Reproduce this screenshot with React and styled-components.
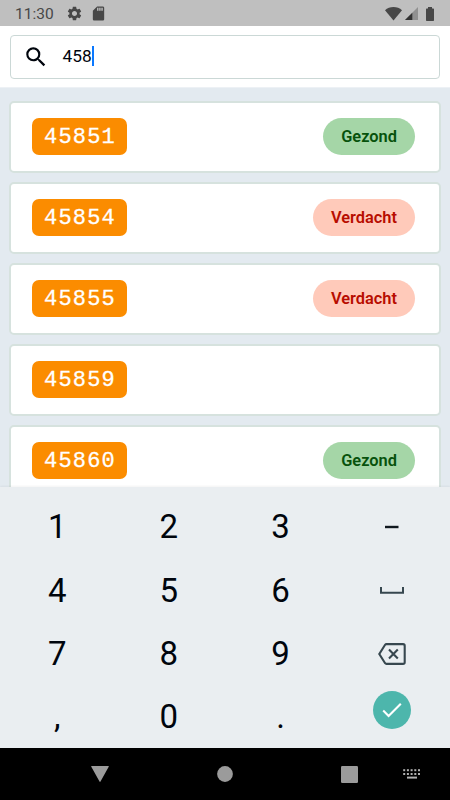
import React from 'react';
import styled, { createGlobalStyle } from 'styled-components';
import { MdSearch, MdSettings, MdSdCard } from 'react-icons/md';

const GlobalStyle = createGlobalStyle`
    * {
        box-sizing: border-box;
    }
    body {
        margin: 0;
        font-family: Roboto, sans-serif;
        color: #00050d;
    }
    svg {
        display: block;
        flex-shrink: 0;
    }
`;

const Screen = styled.div`
    width: 450px;
    height: 800px;
    display: flex;
    flex-direction: column;
    overflow: hidden;
    background: #e3eaf0;
`;

const StatusBar = styled.header`
    height: 26px;
    flex-shrink: 0;
    display: flex;
    align-items: center;
    padding: 1px 16px 0 15px;
    background: #bfbfbf;
    color: #474747;
`;

const Clock = styled.span`
    width: 51px;
    font-size: 15.5px;
    line-height: 20px;
`;

const StatusIcons = styled.div`
    display: flex;
    align-items: center;
    gap: ${props => props.gap};
    margin-left: ${props => props.right ? 'auto' : '0'};
`;

const SearchArea = styled.div`
    height: 62px;
    flex-shrink: 0;
    padding: 9px 10px;
    background: #fff;
    border-bottom: 1px solid #edf1f5;
`;

const SearchBox = styled.div`
    height: 44px;
    display: flex;
    align-items: center;
    padding: 0 0 1px 12px;
    border: 1px solid #cbd8d6;
    border-radius: 4px;
`;

const SearchText = styled.span`
    margin: 0 0 2px 13.5px;
    font-size: 17.3px;
    line-height: 20px;
`;

const Caret = styled.span`
    width: 2px;
    height: 20px;
    margin-bottom: 2px;
    background: #0a78ff;
`;

const List = styled.main`
    flex: 1;
    min-height: 0;
    display: flex;
    flex-direction: column;
    gap: 9px;
    padding: 13px 9px 0;
    overflow: hidden;
`;

const Card = styled.div`
    height: 72px;
    flex-shrink: 0;
    display: flex;
    align-items: center;
    justify-content: space-between;
    padding: 0 24px 1px 21px;
    background: #fff;
    border: 2px solid #d6e2de;
    border-radius: 5px;
`;

const TagNumber = styled.span`
    width: 95px;
    height: 37px;
    padding-left: 12px;
    border-radius: 7px;
    background: #fb8c00;
    color: #fff;
    font-family: "Liberation Mono", monospace;
    font-size: 22px;
    line-height: 40px;
    letter-spacing: 1.2px;
    -webkit-text-stroke: 0.3px #fff;
`;

const Status = styled.span`
    height: 37px;
    padding: 0 18px;
    border-radius: 19px;
    font-size: 16.4px;
    font-weight: 600;
    line-height: 38px;
    background: ${props => props.healthy ? '#a5d6a7' : '#ffcaba'};
    color: ${props => props.healthy ? '#07520c' : '#b80d00'};
`;

const Keyboard = styled.section`
    height: 261px;
    flex-shrink: 0;
    display: grid;
    grid-template-columns: repeat(4, 1fr);
    grid-template-rows: repeat(4, 63.4px);
    padding: 8.5px 2px 0 1.4px;
    background: #eaeef1;
    box-shadow: 0 -1px 2px rgba(0, 0, 0, 0.05);
    overflow: hidden;
`;

const Key = styled.div`
    display: flex;
    align-items: center;
    justify-content: center;
    font-size: 33px;
    line-height: 38px;
`;

const EnterKey = styled.div`
    width: 38px;
    height: 38px;
    margin-bottom: 14px;
    border-radius: 50%;
    display: flex;
    align-items: center;
    justify-content: center;
    background: #4db6ac;
`;

const NavBar = styled.footer`
    height: 52px;
    flex-shrink: 0;
    display: flex;
    justify-content: space-between;
    align-items: center;
    padding: 0 29px 0 91px;
    background: #000;
    color: #9b9b9b;
`;

const NavRight = styled.div`
    display: flex;
    align-items: center;
    gap: 45px;
`;

const animals = [
    { id: '45851', status: 'Gezond' },
    { id: '45854', status: 'Verdacht' },
    { id: '45855', status: 'Verdacht' },
    { id: '45859' },
    { id: '45860', status: 'Gezond' },
];

const keys = [
    '1', '2', '3', 'dash',
    '4', '5', '6', 'space',
    '7', '8', '9', 'backspace',
    ',', '0', '.', 'enter',
];

const Wifi = () => (
    <svg width="17" height="14" viewBox="0 0 17 14" fill="#474747">
        <path d="M0 3.2C2.3 1.2 5.2 0 8.5 0S14.7 1.2 17 3.2L8.5 13.6z" />
    </svg>
);

const Signal = () => (
    <svg width="13" height="13" viewBox="0 0 13 13">
        <path d="M13 0v13H0z" fill="#919191" />
        <path d="M7.3 5.7V13H0z" fill="#333" />
    </svg>
);

const Battery = () => (
    <svg width="8" height="14" viewBox="0 0 8 14" fill="#474747">
        <path d="M2 0h4v1.4h1.3q.7 0 .7.7v11.2q0 .7-.7.7H.7q-.7 0-.7-.7V2.1q0-.7.7-.7H2z" />
    </svg>
);

const KeyContent = ({ name }) => {
    switch (name) {
        case 'dash':
            return (
                <svg width="14" height="4" viewBox="0 0 14 4">
                    <path d="M0 2h13.5" stroke="#10181f" strokeWidth="2.4" />
                </svg>
            );
        case 'space':
            return (
                <svg width="24" height="8" viewBox="0 0 24 8" fill="none">
                    <path d="M1 0v5.8h22V0" stroke="#37474f" strokeWidth="2" />
                </svg>
            );
        case 'backspace':
            return (
                <svg width="28" height="22" viewBox="0 0 28 22" fill="none" stroke="#37474f" strokeWidth="2.1">
                    <path d="M8.4 1.1H25q1.7 0 1.7 1.7v16.4q0 1.7-1.7 1.7H8.4q-.8 0-1.3-.7L1.3 11l5.8-9.2q.5-.7 1.3-.7z" />
                    <path d="M11 6.6l8.8 8.8M19.8 6.6L11 15.4" />
                </svg>
            );
        case 'enter':
            return (
                <EnterKey>
                    <svg width="20" height="16" viewBox="0 0 20 16" fill="none">
                        <path d="M1.2 8.5l5.4 5.4L18.8 1.7" stroke="#fff" strokeWidth="2.1" />
                    </svg>
                </EnterKey>
            );
        default:
            return name;
    }
};

const KeyboardSwitch = () => (
    <svg width="18" height="11" viewBox="0 0 18 11" fill="#b0b0b0">
        {[0, 3.7, 7.4, 11.1, 14.8].map(x => (
            <React.Fragment key={x}>
                <rect x={x + 0.2} y="0.2" width="2" height="2" />
                <rect x={x + 0.2} y="4" width="2" height="2" />
            </React.Fragment>
        ))}
        <rect x="4" y="7.6" width="10" height="2" />
    </svg>
);

const App = () => (
    <Screen>
        <GlobalStyle />
        <StatusBar>
            <Clock>11:30</Clock>
            <StatusIcons gap="7px">
                <MdSettings size={17} />
                <MdSdCard size={17} />
            </StatusIcons>
            <StatusIcons gap="8px" right>
                <StatusIcons gap="3px">
                    <Wifi />
                    <Signal />
                </StatusIcons>
                <Battery />
            </StatusIcons>
        </StatusBar>
        <SearchArea>
            <SearchBox>
                <MdSearch size={26} />
                <SearchText>458</SearchText>
                <Caret />
            </SearchBox>
        </SearchArea>
        <List>
            {animals.map(animal => (
                <Card key={animal.id}>
                    <TagNumber>{animal.id}</TagNumber>
                    {animal.status && (
                        <Status healthy={animal.status === 'Gezond' ? 1 : 0}>{animal.status}</Status>
                    )}
                </Card>
            ))}
        </List>
        <Keyboard>
            {keys.map(key => (
                <Key key={key}>
                    <KeyContent name={key} />
                </Key>
            ))}
        </Keyboard>
        <NavBar>
            <svg width="18" height="16" viewBox="0 0 18 16" fill="currentColor">
                <path d="M.7 0h16.6q.9 0 .4.8L9.5 15.5q-.5.8-1 0L.3.8Q-.2 0 .7 0z" />
            </svg>
            <svg width="16" height="16" viewBox="0 0 16 16" fill="currentColor">
                <circle cx="8" cy="8" r="7.9" />
            </svg>
            <NavRight>
                <svg width="17" height="17" viewBox="0 0 17 17" fill="currentColor">
                    <rect width="17" height="17" rx="1.2" />
                </svg>
                <KeyboardSwitch />
            </NavRight>
        </NavBar>
    </Screen>
);

export default App;
